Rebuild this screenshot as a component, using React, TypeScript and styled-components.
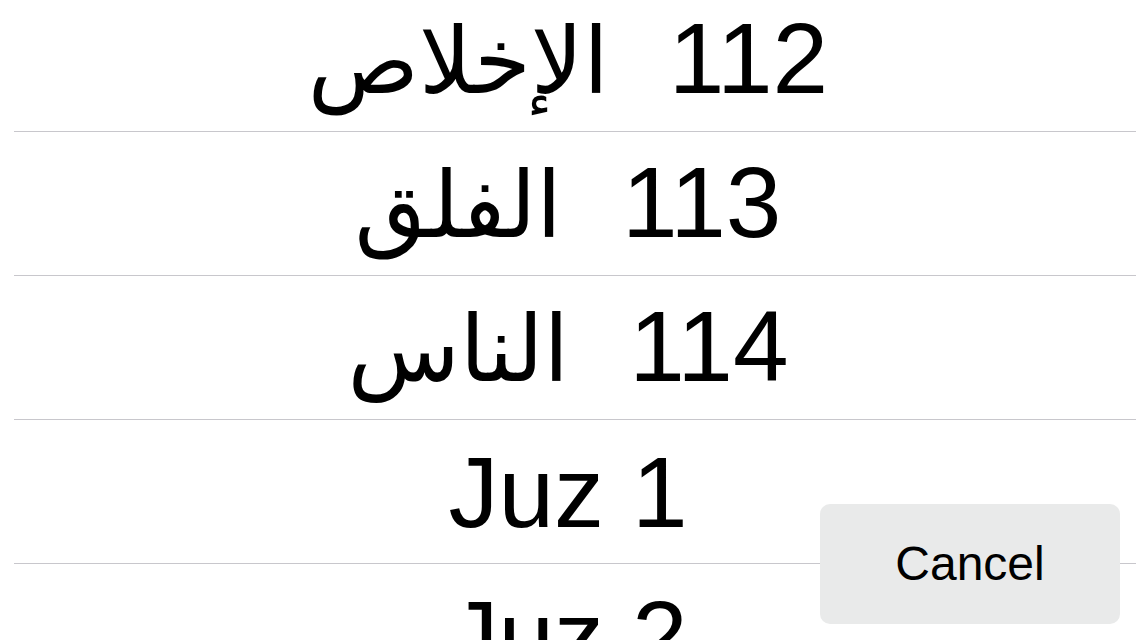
import React from "react";
import styled, { createGlobalStyle } from "styled-components";

const GlobalStyle = createGlobalStyle`
  html, body {
    margin: 0;
    padding: 0;
    background: #ffffff;
    overflow: hidden;
  }
  body {
    font-family: "Liberation Sans", Arial, sans-serif;
    color: #000000;
  }
`;

const Screen = styled.div`
  position: relative;
  width: 1136px;
  height: 640px;
  overflow: hidden;
  background: #ffffff;
`;

const List = styled.div`
  display: flex;
  flex-direction: column;
  margin-top: -12px;
`;

const Row = styled.div`
  height: 143px;
  display: flex;
  align-items: center;
  justify-content: center;
`;

const Separator = styled.div`
  height: 1px;
  margin-left: 14px;
  background: #c8c7cc;
`;

const Label = styled.div`
  display: flex;
  align-items: baseline;
  gap: 60px;
  font-size: 100px;
  line-height: 100px;
  white-space: nowrap;
`;

const Arabic = styled.span`
  font-family: "DejaVu Sans", "Noto Sans", sans-serif;
  font-size: 92px;
  direction: rtl;
  unicode-bidi: isolate;
`;

const Latin = styled.span`
  font-family: "Liberation Sans", Arial, sans-serif;
`;

const CancelButton = styled.button`
  position: absolute;
  right: 16px;
  bottom: 16px;
  width: 300px;
  height: 120px;
  border: none;
  border-radius: 10px;
  background: #e9eaea;
  color: #000000;
  font-family: "Liberation Sans", Arial, sans-serif;
  font-size: 48px;
  padding: 0 0 2px 0;
  display: flex;
  align-items: center;
  justify-content: center;
`;

type Item = { arabic?: string; label: string };

const items: Item[] = [
  { arabic: "الإخلاص", label: "112" },
  { arabic: "الفلق", label: "113" },
  { arabic: "الناس", label: "114" },
  { label: "Juz 1" },
  { label: "Juz 2" },
];

export default function App() {
  return (
    <>
      <GlobalStyle />
      <Screen>
        <List>
          {items.map((it) => (
            <React.Fragment key={it.label}>
              <Row>
                <Label>
                  {it.arabic && <Arabic>{it.arabic}</Arabic>}
                  <Latin>{it.label}</Latin>
                </Label>
              </Row>
              <Separator />
            </React.Fragment>
          ))}
        </List>
        <CancelButton>Cancel</CancelButton>
      </Screen>
    </>
  );
}
